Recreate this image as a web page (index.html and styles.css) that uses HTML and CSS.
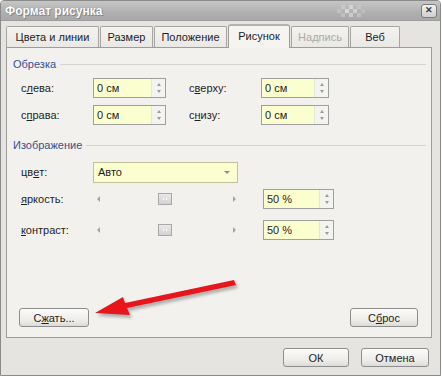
FILE: index.html
```html
<!DOCTYPE html>
<html lang="ru">
<head>
<meta charset="utf-8">
<title>Формат рисунка</title>
<link rel="stylesheet" href="styles.css">
</head>
<body>
<div class="window">
  <div class="titlebar">
    <span class="title">Формат рисунка</span>
    <svg class="checker" width="30" height="14" viewBox="0 0 30 14">
      <rect x="4" y="1" width="4" height="4" fill="#c9c9c9"/>
      <rect x="12" y="1" width="4" height="4" fill="#d4d4d4"/>
      <rect x="20" y="1" width="4" height="4" fill="#c4c4c4"/>
      <rect x="0" y="5" width="4" height="4" fill="#c2c2c2"/>
      <rect x="8" y="5" width="4" height="4" fill="#d8d8d8"/>
      <rect x="16" y="5" width="4" height="4" fill="#cfcfcf"/>
      <rect x="24" y="5" width="4" height="4" fill="#bdbdbd"/>
      <rect x="4" y="9" width="4" height="4" fill="#bfbfbf"/>
      <rect x="12" y="9" width="4" height="4" fill="#cccccc"/>
      <rect x="20" y="9" width="4" height="4" fill="#c0c0c0"/>
    </svg>
    <span class="close">&#x2715;</span>
  </div>
  <div class="body">
    <div class="tabs">
      <span class="tab t1">Цвета и линии</span>
      <span class="tab t2">Размер</span>
      <span class="tab t3">Положение</span>
      <span class="tab t4 active">Рисунок</span>
      <span class="tab t5 disabled">Надпись</span>
      <span class="tab t6">Веб</span>
    </div>
    <div class="panel">
      <div class="group"><span class="group-title">Обрезка</span><span class="rule"></span></div>
      <div class="crop-grid">
        <span class="lbl">с<u>л</u>ева:</span>
        <span class="spin"><span class="val">0 см</span><span class="spin-btn"><i class="up"></i><i class="down"></i></span></span>
        <span class="lbl">с<u>в</u>ерху:</span>
        <span class="spin narrow"><span class="val">0 см</span><span class="spin-btn"><i class="up"></i><i class="down"></i></span></span>
        <span class="lbl">с<u>п</u>рава:</span>
        <span class="spin"><span class="val">0 см</span><span class="spin-btn"><i class="up"></i><i class="down"></i></span></span>
        <span class="lbl">с<u>н</u>изу:</span>
        <span class="spin narrow"><span class="val">0 см</span><span class="spin-btn"><i class="up"></i><i class="down"></i></span></span>
      </div>
      <div class="group group2"><span class="group-title">Изображение</span><span class="rule"></span></div>
      <div class="img-rows">
        <div class="row r-color">
          <span class="lbl">цв<u>е</u>т:</span>
          <span class="combo"><span class="val">Авто</span><i class="dd"></i></span>
        </div>
        <div class="row r-bright">
          <span class="lbl"><u>я</u>ркость:</span>
          <span class="slider"><i class="sl-left"></i><span class="thumb"><b></b></span><i class="sl-right"></i></span>
          <span class="spin pct"><span class="val">50 %</span><span class="spin-btn"><i class="up"></i><i class="down"></i></span></span>
        </div>
        <div class="row r-contrast">
          <span class="lbl"><u>к</u>онтраст:</span>
          <span class="slider"><i class="sl-left"></i><span class="thumb"><b></b></span><i class="sl-right"></i></span>
          <span class="spin pct"><span class="val">50 %</span><span class="spin-btn"><i class="up"></i><i class="down"></i></span></span>
        </div>
      </div>
      <div class="panel-buttons">
        <span class="btn b-compress">С<u>ж</u>ать...</span>
        <span class="btn b-reset">С<u>б</u>рос</span>
      </div>
    </div>
    <div class="footer">
      <span class="btn b-ok">ОК</span>
      <span class="btn b-cancel">Отмена</span>
    </div>
  </div>
  <svg class="arrow" width="442" height="377" viewBox="0 0 442 377">
    <defs>
      <filter id="sh" x="-20%" y="-50%" width="140%" height="200%">
        <feGaussianBlur stdDeviation="1.6"/>
      </filter>
    </defs>
    <g transform="translate(2,3)" fill="#7a7a7a" opacity="0.55" filter="url(#sh)">
      <path d="M234 280 L236 285 L127 308 L130 315 L95 313 L123 297 L125 303 Z"/>
    </g>
    <path d="M234 280 L236 285 L127 308 L130 315 L95 313 L123 297 L125 303 Z" fill="#e8151a"/>
  </svg>
</div>
</body>
</html>
```
FILE: styles.css
```css
* { box-sizing: border-box; }
html, body { margin: 0; padding: 0; background: #ffffff; }
body {
  font-family: "Liberation Sans", Arial, sans-serif;
  font-size: 11px;
  color: #1e1e1e;
}
u { text-decoration: underline; text-underline-offset: 1px; }

.window {
  position: relative;
  width: 441px;
  height: 376px;
  border: 1px solid #8a8a8a;
  border-radius: 4px 4px 0 0;
  background: #e5e4e0;
  display: flex;
  flex-direction: column;
  overflow: hidden;
}

.titlebar {
  height: 20px;
  flex: none;
  display: flex;
  align-items: center;
  padding: 0 3px 0 4px;
  background: linear-gradient(#c6c6c6, #b0b0b0 60%, #a8a8a8);
  border-bottom: 1px solid #9c9c9c;
}
.title {
  font-family: "Liberation Sans", Arial, sans-serif;
  font-weight: bold;
  font-size: 12px;
  color: #ffffff;
  text-shadow: 0 0 1px #6e6e6e, 1px 1px 0 #8a8a8a;
  flex: 1;
}
.checker { margin-right: 54px; margin-top: 1px; }
.close {
  width: 16px;
  height: 14px;
  border: 1px solid #7c7c7c;
  border-radius: 3px;
  background: linear-gradient(#f2f2f2, #cfcfcf);
  color: #3a3a3a;
  font-size: 9px;
  font-weight: bold;
  display: flex;
  align-items: center;
  justify-content: center;
  line-height: 1;
}

.body {
  flex: 1;
  display: flex;
  flex-direction: column;
  padding: 5px 8px 0 5px;
}

.tabs {
  display: flex;
  gap: 1px;
  height: 21px;
  align-items: flex-end;
  position: relative;
  z-index: 2;
}
.tab {
  height: 21px;
  display: flex;
  align-items: center;
  justify-content: center;
  border: 1px solid #a7a6a2;
  border-bottom: none;
  border-radius: 2px 2px 0 0;
  background: linear-gradient(#f4f3f0, #e9e8e4);
  color: #1e1e1e;
}
.t1 { width: 93px; }
.t2 { width: 53px; }
.t3 { width: 73px; }
.t4 { width: 62px; }
.t5 { width: 58px; }
.t6 { width: 50px; }
.tab.active {
  height: 24px;
  margin-bottom: -1px;
  background: #f5f4f1;
  border-color: #9d9c98;
  border-top: 2px solid #b3b2ae;
  border-radius: 3px 3px 0 0;
  padding-bottom: 2px;
}
.tab.disabled { color: #aaaaaa; }

.panel {
  height: 291px;
  width: 426px;
  border: 1px solid #9d9c98;
  background: #f2f1ed;
  display: flex;
  flex-direction: column;
  padding: 9px 5px 10px 6px;
}

.group {
  display: flex;
  align-items: center;
  height: 14px;
  gap: 4px;
}
.group-title { color: #33508f; }
.rule { flex: 1; height: 1px; background: #d4d3cf; margin-top: 1px; }
.group2 { margin-top: 13px; }

.crop-grid {
  margin-top: 7px;
  padding-left: 8px;
  display: grid;
  grid-template-columns: 72px 96px 72px 68px;
  row-gap: 7px;
}
.crop-grid .spin { width: 73px; }
.crop-grid .spin.narrow { width: 68px; }

.lbl { display: flex; align-items: center; height: 20px; }

.spin {
  height: 20px;
  display: flex;
  border: 1px solid #9f9f9f;
  background: #fbffd0;
}
.spin .val {
  flex: 1;
  padding-left: 3px;
  display: flex;
  align-items: center;
}
.spin-btn {
  width: 14px;
  background: #f3f3ef;
  border-left: 1px solid #e4e4e0;
  display: flex;
  flex-direction: column;
  align-items: center;
  justify-content: center;
  gap: 4px;
}
.up, .down { display: block; width: 0; height: 0; border-left: 2px solid transparent; border-right: 2px solid transparent; }
.up { border-bottom: 3px solid #9a9a9a; }
.down { border-top: 3px solid #9a9a9a; }

.img-rows {
  margin-top: 10px;
  padding-left: 8px;
  display: flex;
  flex-direction: column;
}
.row { display: flex; align-items: center; height: 20px; }
.row .lbl { width: 72px; }
.r-bright { margin-top: 7px; }
.r-contrast { margin-top: 11px; }

.combo {
  width: 145px;
  height: 21px;
  border: 1px solid #c3c09a;
  background: #fbffd0;
  display: flex;
  align-items: center;
  padding: 0 7px 0 4px;
}
.combo .val { flex: 1; }
.dd { display: block; width: 0; height: 0; border-left: 3px solid transparent; border-right: 3px solid transparent; border-top: 3px solid #8d8d8d; }

.slider {
  width: 139px;
  height: 20px;
  margin-left: 4px;
  display: flex;
  align-items: center;
  justify-content: space-between;
  margin-right: 27px;
}
.sl-left, .sl-right { display: block; width: 0; height: 0; border-top: 3px solid transparent; border-bottom: 3px solid transparent; }
.sl-left { border-right: 3px solid #a3a3a3; }
.sl-right { border-left: 3px solid #a3a3a3; }
.thumb {
  width: 14px;
  height: 12px;
  margin-right: 4px;
  border: 1px solid #a8a8a8;
  background: linear-gradient(#e9e9e9, #d2d2d2);
  display: flex;
  align-items: center;
  justify-content: center;
}
.thumb b { width: 4px; height: 2px; border-left: 1px solid #fff; border-right: 1px solid #fff; }
.spin.pct { width: 71px; }

.panel-buttons {
  margin-top: auto;
  display: flex;
  justify-content: space-between;
  padding: 0 8px 0 6px;
}

.btn {
  height: 19px;
  border: 1px solid #8e8e8e;
  border-radius: 3px;
  background: linear-gradient(#fbfbfa, #ecebe7 70%, #dcdbd6);
  display: flex;
  align-items: center;
  justify-content: center;
  color: #1e1e1e;
}
.b-compress { width: 70px; }
.b-reset { width: 68px; }

.footer {
  display: flex;
  justify-content: flex-end;
  gap: 12px;
  padding: 10px 3px 0 0;
}
.b-ok { width: 66px; }
.b-cancel { width: 68px; }

.arrow {
  position: absolute;
  left: -1px;
  top: -1px;
  pointer-events: none;
}
```
